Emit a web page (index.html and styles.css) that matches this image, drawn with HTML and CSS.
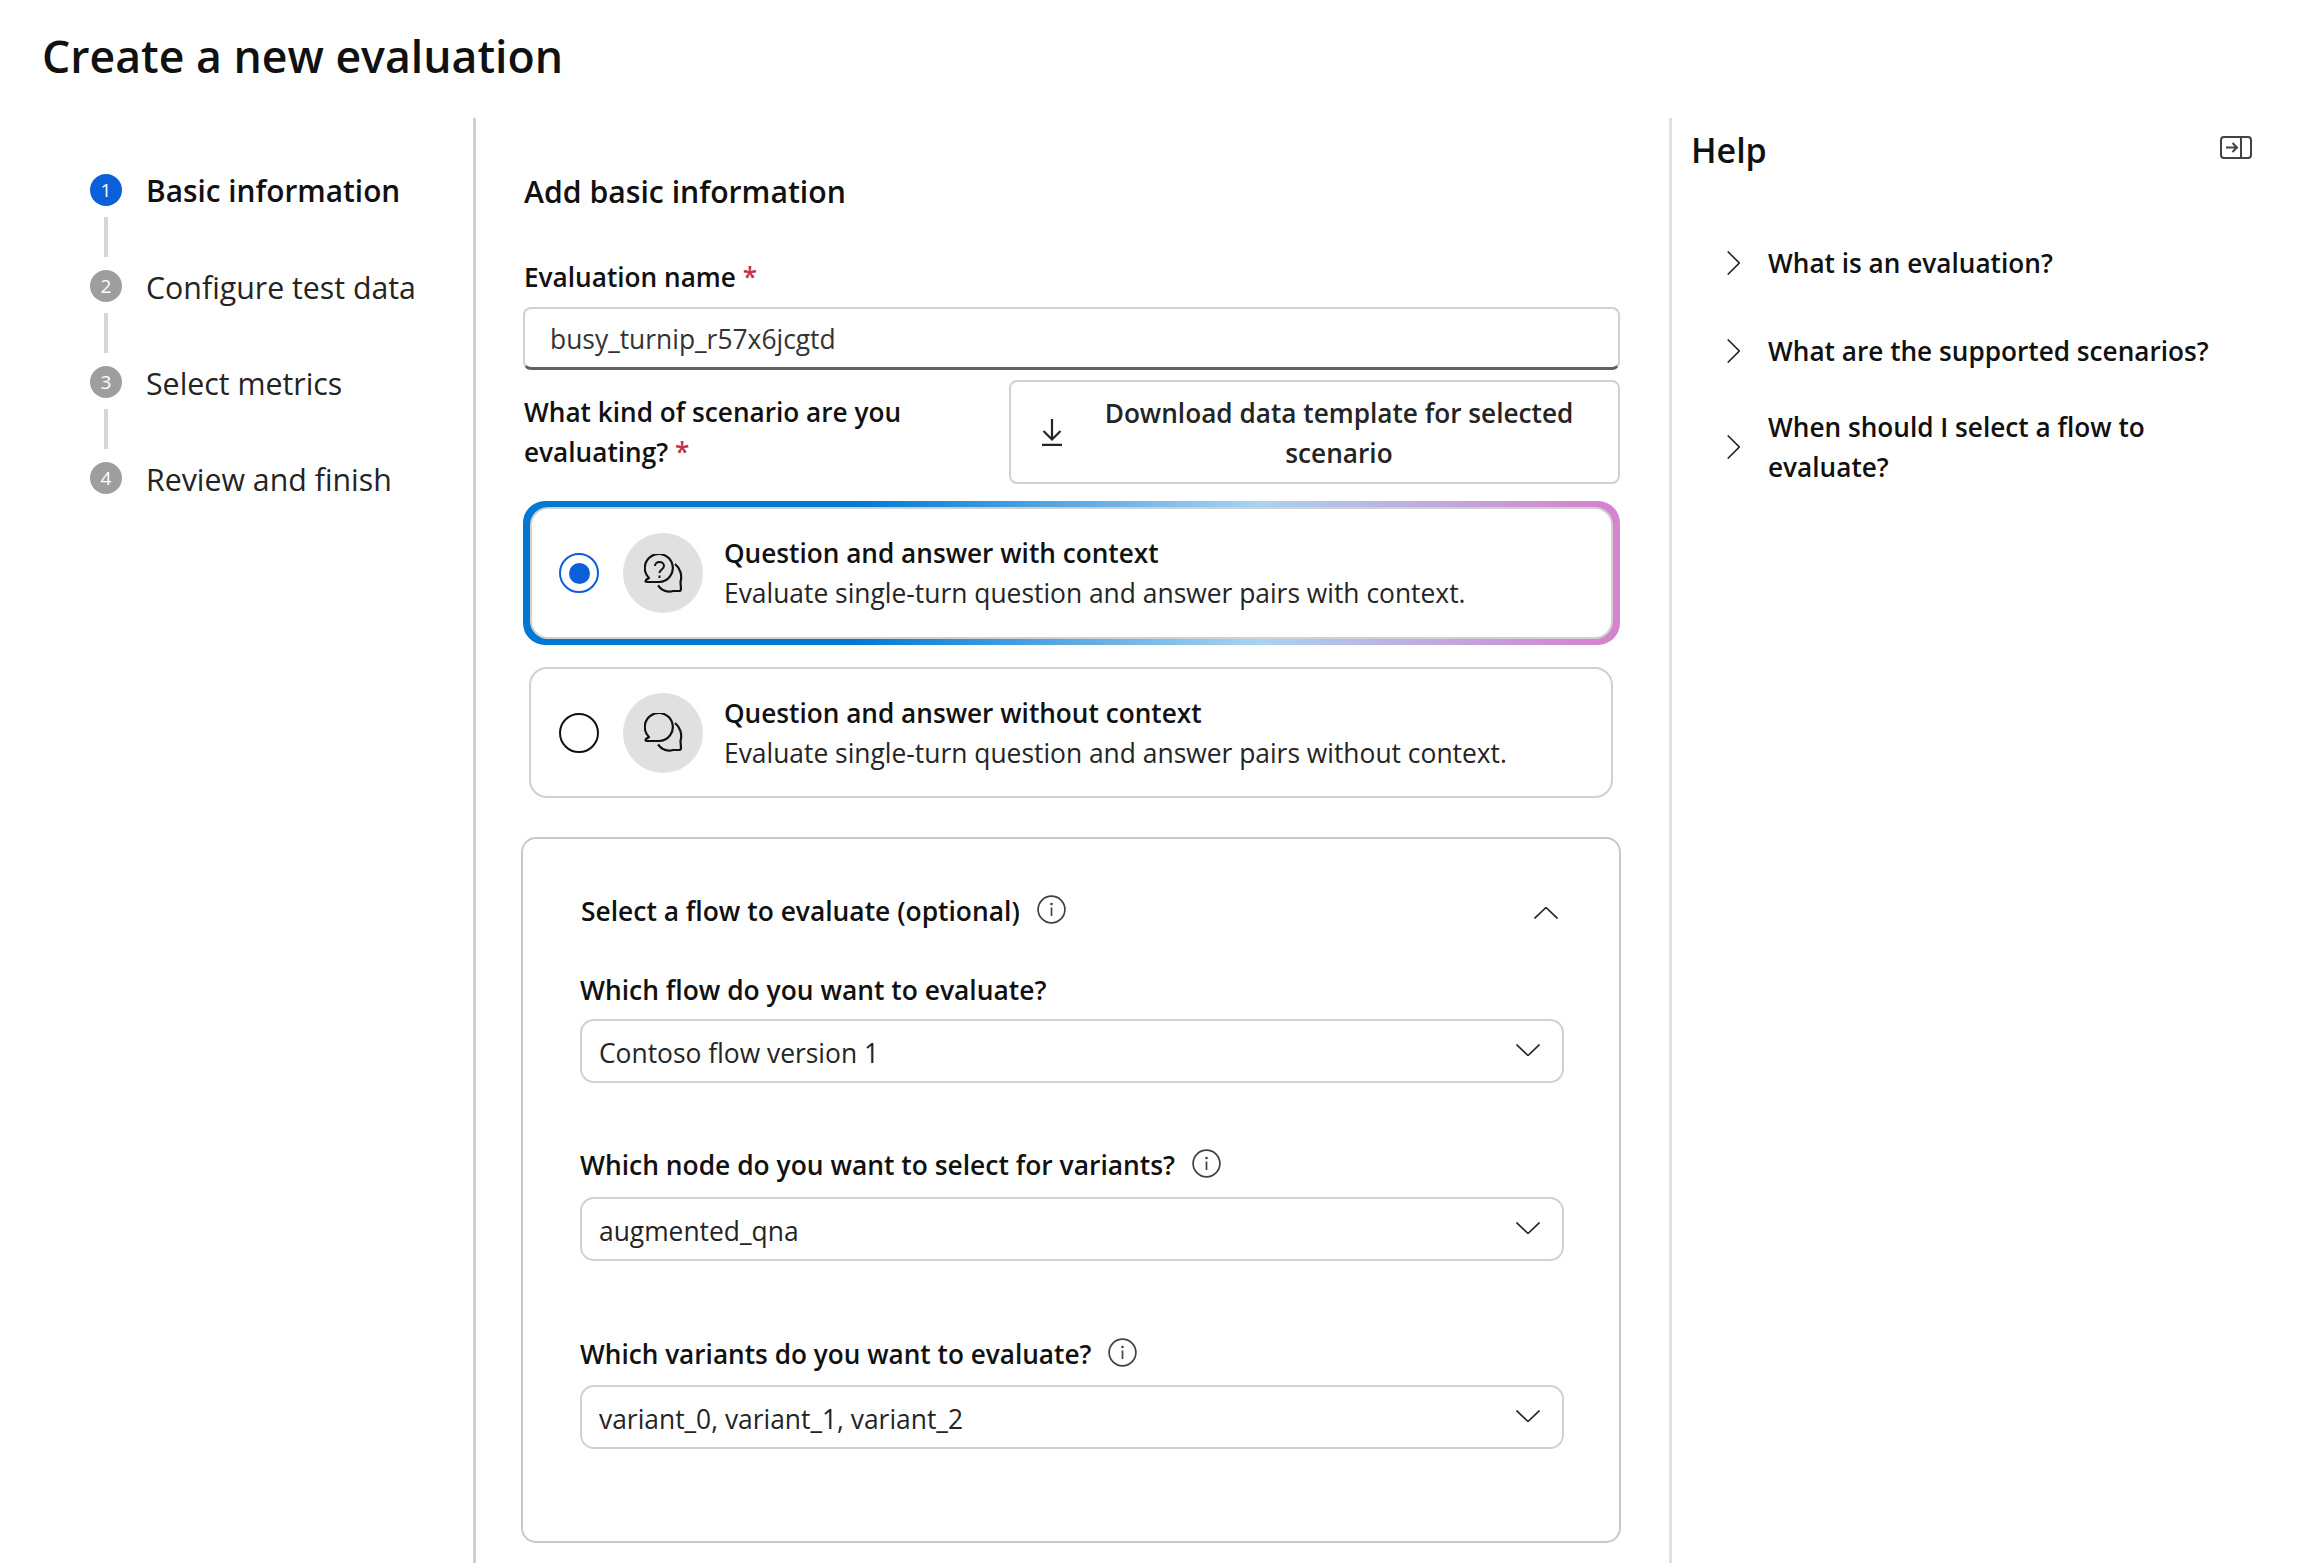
FILE: index.html
```html
<!DOCTYPE html>
<html lang="en">
<head>
    <meta charset="UTF-8">
    <title>Create a new evaluation</title>
    <link rel="stylesheet" href="styles.css">
</head>
<body>
    <svg class="defs" width="0" height="0">
        <symbol id="chev-down" viewBox="0 0 24 12"><path d="M0.5 0.5 L12 11.5 L23.5 0.5" fill="none" stroke="#242424" stroke-width="1.6"/></symbol>
        <symbol id="chev-right" viewBox="0 0 13 24"><path d="M0.7 0.5 L12.3 12 L0.7 23.5" fill="none" stroke="#242424" stroke-width="1.6"/></symbol>
        <symbol id="info" viewBox="0 0 29 29"><circle cx="14.5" cy="14.5" r="13.4" fill="none" stroke="#424242" stroke-width="1.7"/><circle cx="14.5" cy="9" r="1.3" fill="#424242"/><path d="M14.5 12.5 V21" stroke="#424242" stroke-width="1.7"/></symbol>
        <symbol id="bubbles" viewBox="0 0 39 39"><path d="M5 24 A14 14 0 1 1 15 28 H3 Q0.8 28 2 26 Z" fill="none" stroke="#111" stroke-width="2.2" stroke-linejoin="round"/><path d="M31 10 C36 14 38.5 21 36.5 28 L37 35 Q37 37 35 37 H29 C24 38.5 18 37 14 31.5" fill="none" stroke="#111" stroke-width="2.2" stroke-linejoin="round"/></symbol>
    </svg>

    <h1 class="page-title">Create a new evaluation</h1>

    <div class="layout">
        <nav class="steps">
            <div class="step active"><span class="step-num">1</span><span class="step-label">Basic information</span></div>
            <div class="step-line"></div>
            <div class="step"><span class="step-num">2</span><span class="step-label">Configure test data</span></div>
            <div class="step-line"></div>
            <div class="step"><span class="step-num">3</span><span class="step-label">Select metrics</span></div>
            <div class="step-line"></div>
            <div class="step"><span class="step-num">4</span><span class="step-label">Review and finish</span></div>
        </nav>

        <main class="content">
            <h2 class="section-title">Add basic information</h2>

            <div class="field-label name-label">Evaluation name <span class="req">*</span></div>
            <div class="text-input">busy_turnip_r57x6jcgtd</div>

            <div class="scenario-row">
                <div class="field-label scenario-label">What kind of scenario are you<br>evaluating? <span class="req">*</span></div>
                <div class="download-btn">
                    <svg class="download-icon" width="20" height="27" viewBox="0 0 20 27"><path d="M10 0 V20 M1.5 12 L10 20.5 L18.5 12 M0 25.8 H20" fill="none" stroke="#242424" stroke-width="2.2"/></svg>
                    <span class="download-text">Download data template for selected scenario</span>
                </div>
            </div>

            <div class="card-frame">
                <div class="card-inner">
                    <span class="radio checked"><span class="radio-dot"></span></span>
                    <span class="card-icon">
                        <svg width="39" height="39"><use href="#bubbles"/><path d="M11 12 C11 6.5 20 6.5 20 12 C20 15.5 15.5 15.5 15.5 19 M15.5 21.5 V24" fill="none" stroke="#111" stroke-width="2"/></svg>
                    </span>
                    <div>
                        <div class="card-title">Question and answer with context</div>
                        <div class="card-sub">Evaluate single-turn question and answer pairs with context.</div>
                    </div>
                </div>
            </div>

            <div class="card-plain">
                <span class="radio"></span>
                <span class="card-icon"><svg width="39" height="39"><use href="#bubbles"/></svg></span>
                <div>
                    <div class="card-title">Question and answer without context</div>
                    <div class="card-sub">Evaluate single-turn question and answer pairs without context.</div>
                </div>
            </div>

            <section class="flow-panel">
                <div class="flow-head">
                    <span class="flow-title">Select a flow to evaluate (optional)</span>
                    <svg class="info" width="29" height="29"><use href="#info"/></svg>
                    <svg class="flow-collapse" width="24" height="12"><use href="#chev-down"/></svg>
                </div>

                <div class="field-label flow-label first">Which flow do you want to evaluate?</div>
                <div class="select first">Contoso flow version 1<svg width="24" height="12"><use href="#chev-down"/></svg></div>

                <div class="field-label flow-label">Which node do you want to select for variants?<svg class="info" width="29" height="29"><use href="#info"/></svg></div>
                <div class="select">augmented_qna<svg width="24" height="12"><use href="#chev-down"/></svg></div>

                <div class="field-label flow-label last">Which variants do you want to evaluate?<svg class="info" width="29" height="29"><use href="#info"/></svg></div>
                <div class="select">variant_0, variant_1, variant_2<svg width="24" height="12"><use href="#chev-down"/></svg></div>
            </section>
        </main>

        <aside class="help">
            <div class="help-head">
                <h2 class="help-title">Help</h2>
                <svg width="32" height="23" viewBox="0 0 32 23"><rect x="1" y="1" width="30" height="21" rx="3" fill="none" stroke="#424242" stroke-width="2"/><path d="M21 1 V22 M6 11.5 H17 M12.5 7 L17 11.5 L12.5 16" fill="none" stroke="#424242" stroke-width="2"/></svg>
            </div>
            <div class="help-item"><svg width="13" height="24"><use href="#chev-right"/></svg><span>What is an evaluation?</span></div>
            <div class="help-item tight"><svg width="13" height="24"><use href="#chev-right"/></svg><span>What are the supported scenarios?</span></div>
            <div class="help-item"><svg width="13" height="24"><use href="#chev-right"/></svg><span>When should I select a flow to evaluate?</span></div>
        </aside>
    </div>
</body>
</html>
```

FILE: styles.css
```css
html, body {
    height: 100%;
}
body {
    margin: 0;
    overflow: hidden;
    background: #fff;
    color: #111;
    font-family: "Open Sans", "Noto Sans", sans-serif;
    font-size: 26.4px;
    line-height: 40px;
}
.defs {
    position: absolute;
}
h1, h2 {
    margin: 0;
}
.page-title {
    height: 118px;
    padding: 26px 0 0 42px;
    box-sizing: border-box;
    font-size: 44.6px;
    font-weight: 600;
    line-height: 60px;
    color: #111;
}
.layout {
    display: flex;
    height: 1445px;
}

/* stepper */
.steps {
    width: 476px;
    flex: none;
    box-sizing: border-box;
    padding: 56px 0 0 90px;
    border-right: 3px solid #d1d1d1;
}
.step {
    display: flex;
    align-items: center;
    height: 32px;
    gap: 24px;
    font-size: 30.3px;
    color: #242424;
}
.step-label {
    padding-top: 3px;
}
.step.active {
    font-size: 29.8px;
    font-weight: 600;
    color: #111;
}
.active .step-label {
    padding-top: 1px;
}
.step-num {
    display: flex;
    align-items: center;
    justify-content: center;
    flex: none;
    width: 32px;
    height: 32px;
    border-radius: 50%;
    background: #9e9e9e;
    color: #fff;
    font-size: 19px;
    font-weight: 400;
}
.active .step-num {
    background: #0b5fd9;
}
.step-line {
    width: 4px;
    height: 40px;
    margin: 11px 0 13px 14px;
    background: #d6d6d6;
}

/* main column */
.content {
    width: 1100px;
    flex: none;
    box-sizing: border-box;
    padding-left: 47px;
}
.section-title {
    margin: 54px 0 0 1px;
    font-size: 30.2px;
    font-weight: 600;
    line-height: 40px;
}
.field-label {
    font-size: 26.2px;
    font-weight: 600;
}
.req {
    color: #c4314b;
}
.name-label {
    margin: 45px 0 0 1px;
}
.text-input {
    box-sizing: border-box;
    width: 1097px;
    height: 63px;
    margin-top: 10px;
    padding: 10px 0 0 25px;
    border: 2px solid #d1d1d1;
    border-bottom: 3px solid #616161;
    border-radius: 8px;
    color: #333;
}
.scenario-row {
    display: flex;
    justify-content: space-between;
    width: 1097px;
    margin-top: 10px;
}
.scenario-label {
    width: 440px;
    margin: 12px 0 0 1px;
}
.download-btn {
    display: flex;
    align-items: center;
    box-sizing: border-box;
    width: 611px;
    height: 104px;
    padding: 0 30px 0 31px;
    border: 2px solid #d1d1d1;
    border-radius: 8px;
}
.download-icon {
    flex: none;
}
.download-text {
    flex: 1;
    padding: 2px 0 0 28px;
    text-align: center;
    font-size: 26.2px;
    font-weight: 600;
    color: #242424;
}
.card-frame {
    width: 1097px;
    height: 144px;
    box-sizing: border-box;
    margin-top: 17px;
    padding: 6px 7px;
    border-radius: 22px;
    background: linear-gradient(90deg, #0078d4 30%, #a8d3f2 67%, #d585d0 97%);
}
.card-inner, .card-plain {
    display: flex;
    align-items: center;
    box-sizing: border-box;
    border: 2px solid #d1d1d1;
    border-radius: 18px;
    background: #fff;
}
.card-inner {
    height: 132px;
    padding-left: 27px;
}
.card-plain {
    width: 1084px;
    height: 131px;
    margin: 22px 0 0 6px;
    padding-left: 28px;
}
.radio {
    display: flex;
    align-items: center;
    justify-content: center;
    flex: none;
    box-sizing: border-box;
    width: 40px;
    height: 40px;
    border: 2px solid #111;
    border-radius: 50%;
}
.radio.checked {
    border-color: #0b5fd9;
}
.radio-dot {
    width: 21px;
    height: 21px;
    border-radius: 50%;
    background: #0b5fd9;
}
.card-icon {
    display: flex;
    align-items: center;
    justify-content: center;
    flex: none;
    width: 80px;
    height: 80px;
    margin: 0 21px 0 24px;
    border-radius: 50%;
    background: #e0e0e0;
}
.card-title {
    font-size: 26.2px;
    font-weight: 600;
}
.card-sub {
    color: #242424;
}

/* flow panel */
.flow-panel {
    box-sizing: border-box;
    width: 1100px;
    height: 706px;
    margin: 39px 0 0 -2px;
    padding: 52px 0 0 57px;
    border: 2px solid #c8c8c8;
    border-radius: 15px;
}
.flow-head {
    display: flex;
    align-items: center;
    width: 978px;
    height: 40px;
}
.flow-title {
    font-weight: 600;
    margin-left: 1px;
}
.info {
    flex: none;
    margin: -3px 0 0 17px;
}
.flow-collapse {
    margin: 4px 0 0 auto;
    transform: rotate(180deg);
}
.flow-label {
    display: flex;
    align-items: center;
    margin-top: 62px;
    font-size: 26.4px;
}
.flow-label.first {
    margin-top: 39px;
}
.flow-label.last {
    margin-top: 73px;
    font-size: 26.2px;
}
.select {
    display: flex;
    align-items: center;
    justify-content: space-between;
    box-sizing: border-box;
    width: 984px;
    height: 64px;
    margin-top: 12px;
    padding: 4px 22px 0 17px;
    border: 2px solid #d1d1d1;
    border-radius: 14px;
    color: #242424;
}
.select.first {
    margin-top: 9px;
}
.flow-label.last + .select {
    margin-top: 11px;
}
.select svg {
    margin-top: -6px;
}

/* help pane */
.help {
    flex: 1;
    box-sizing: border-box;
    margin-left: 93px;
    padding-left: 19px;
    border-left: 3px solid #e0e0e0;
}
.help-head {
    display: flex;
    justify-content: space-between;
    align-items: flex-start;
    width: 561px;
    padding-bottom: 63px;
}
.help-title {
    font-size: 34px;
    font-weight: 600;
    line-height: 60px;
    margin-top: 2px;
}
.help-head svg {
    margin-top: 18px;
}
.help-item {
    display: flex;
    align-items: center;
    gap: 28px;
    width: 531px;
    margin-bottom: 48px;
    padding-left: 36px;
    font-size: 26.2px;
    font-weight: 600;
}
.help-item.tight {
    margin-bottom: 36px;
}
.help-item svg {
    flex: none;
}
```
